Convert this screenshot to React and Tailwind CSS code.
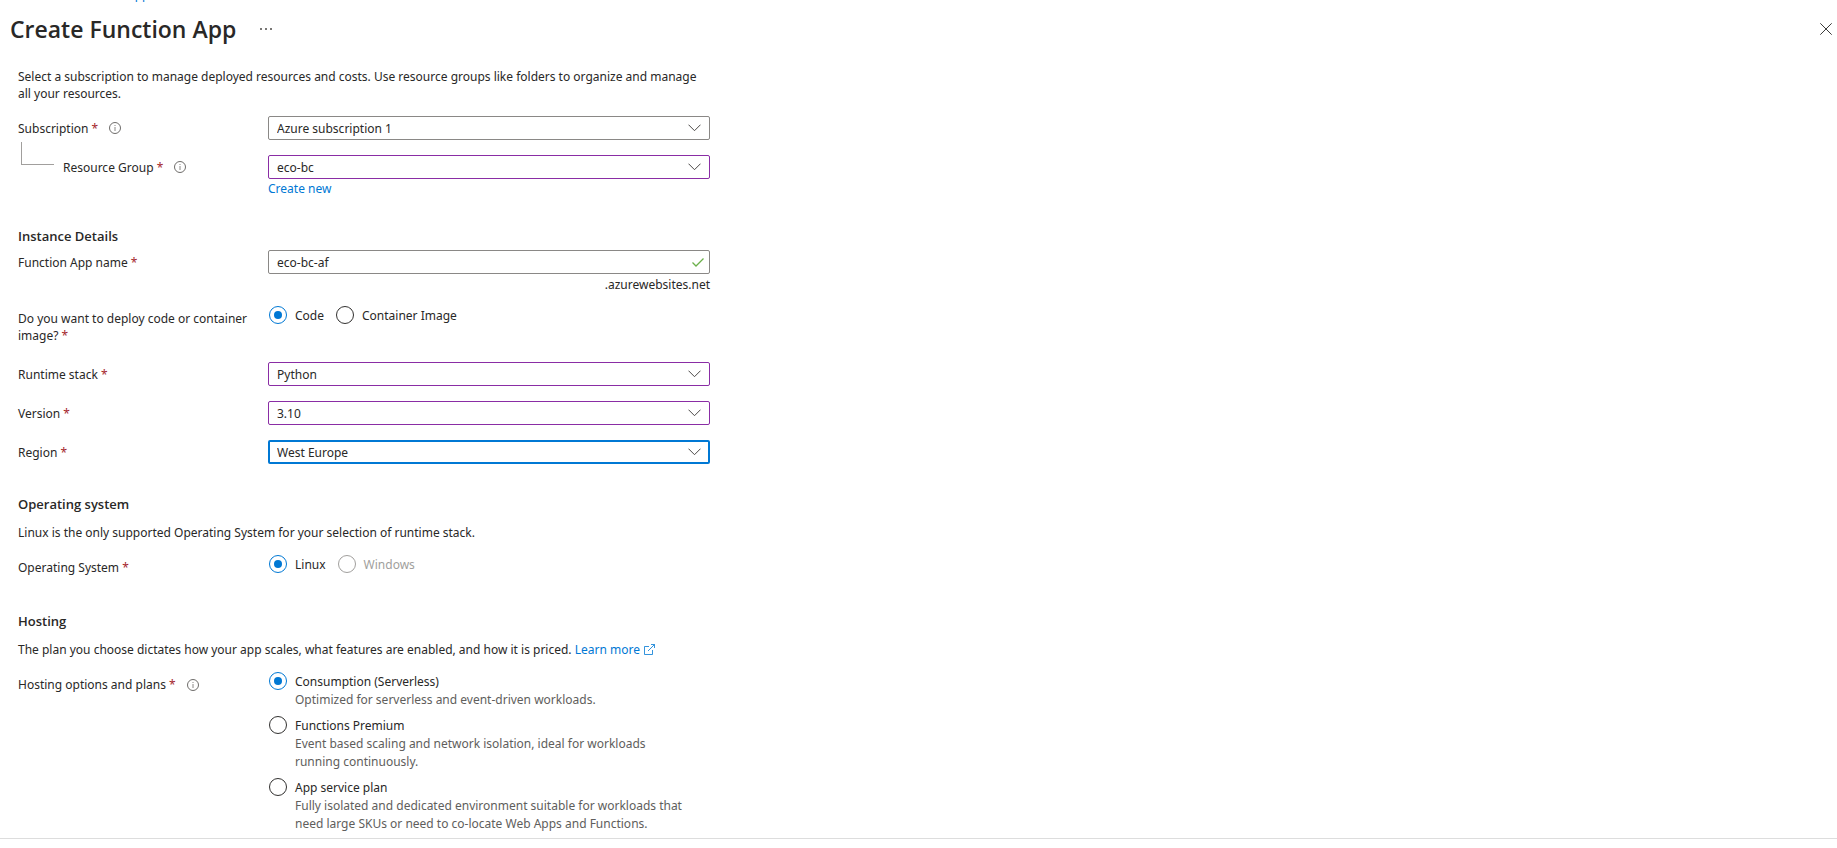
import React from 'react';

const InfoIcon = () => (
  <svg width="12" height="12" viewBox="0 0 12 12" fill="none" aria-hidden="true">
    <circle cx="6" cy="6" r="5.5" stroke="#6e6c6a" />
    <path d="M6 5v4M6 3v1" stroke="#8a8886" />
  </svg>
);

const Chevron = () => (
  <svg
    width="13"
    height="8"
    viewBox="0 0 13 8"
    fill="none"
    aria-hidden="true"
    className="absolute right-[9px] top-2 pointer-events-none"
  >
    <path d="M0.5 0.7L6.5 6.7L12.5 0.7" stroke="#4a4846" strokeWidth="1" />
  </svg>
);

const Required = () => <span className="text-[#a4262c]">*</span>;

const SectionTitle = ({ children, className = '' }) => (
  <h2 className={`font-['Open_Sans',sans-serif] text-[13px] font-semibold leading-5 ${className}`}>{children}</h2>
);

// Label on the left, control on the right
const Row = ({ children, className = '' }) => (
  <div className={`grid grid-cols-[250px_minmax(0,442px)] ${className}`}>{children}</div>
);

const FieldLabel = ({ htmlFor, text, info }) => (
  <div className="flex h-6 items-center gap-[11px]">
    <label htmlFor={htmlFor}>
      {text} <Required />
    </label>
    {info && (
      <button type="button" aria-label={`About ${text}`}>
        <InfoIcon />
      </button>
    )}
  </div>
);

const borders = {
  default: 'border border-[#8a8886] pl-2',
  edited: 'border border-[#8a2da5] pl-2',
  focused: 'border-2 border-[#0078d4] pl-[7px]',
};

const Select = ({ id, value, state = 'default' }) => (
  <div className="relative">
    <select
      id={id}
      defaultValue={value}
      className={`block h-6 w-full appearance-none rounded-xs bg-white pr-7 outline-none ${borders[state]}`}
    >
      <option>{value}</option>
    </select>
    <Chevron />
  </div>
);

const Radio = ({ name, label, description, checked, disabled }) => (
  <label className={`flex gap-2 ${disabled ? 'text-[#a19f9d]' : ''}`}>
    <input
      type="radio"
      name={name}
      defaultChecked={checked}
      disabled={disabled}
      className="grid size-[18px] shrink-0 appearance-none place-content-center rounded-full border border-[#323130] checked:border-[#0078d4] checked:before:size-2 checked:before:rounded-full checked:before:bg-[#0078d4] disabled:border-[#a19f9d]"
    />
    <span className="pt-px leading-[18px]">
      {label}
      {description && <span className="block text-[#605e5c]">{description}</span>}
    </span>
  </label>
);

const App = () => {
  return (
    <div className="flex min-h-screen flex-col bg-white font-['Noto_Sans','Open_Sans',sans-serif] text-[12px] leading-[17px] text-[#292827]">
      {/* Breadcrumb, mostly scrolled out of view */}
      <nav className="flex h-[3px] items-end gap-3 overflow-hidden pl-[10px]" aria-label="Breadcrumb">
        <a href="#home" className="text-[#0078d4]">Home</a>
        <span className="text-[#605e5c]">&gt;</span>
        <a href="#function-app" className="text-[#0078d4]">Function App</a>
        <span className="text-[#605e5c]">&gt;</span>
      </nav>

      {/* Title bar */}
      <header className="flex h-[52px] items-center pl-[10px] pr-[5px]">
        <h1 className="font-['Open_Sans',sans-serif] text-[23px] font-semibold leading-8">Create Function App</h1>
        <button type="button" aria-label="More" className="ml-6">
          <svg width="12" height="2" viewBox="0 0 12 2" fill="#797775" aria-hidden="true">
            <rect x="0" width="2" height="2" />
            <rect x="5" width="2" height="2" />
            <rect x="10" width="2" height="2" />
          </svg>
        </button>
        <button type="button" aria-label="Close" className="ml-auto">
          <svg width="12" height="12" viewBox="0 0 12 12" fill="none" stroke="#3b3a39" aria-hidden="true">
            <path d="M0.3 0.3L11.7 11.7M11.7 0.3L0.3 11.7" />
          </svg>
        </button>
      </header>

      <main className="px-[18px] pb-[5px] pt-[13px]">
        <p className="max-w-[700px]">
          Select a subscription to manage deployed resources and costs. Use resource groups like folders to organize and manage
          <br />
          all your resources.
        </p>

        <Row className="mt-[14px]">
          <FieldLabel htmlFor="subscription" text="Subscription" info />
          <Select id="subscription" value="Azure subscription 1" />
        </Row>
        <Row className="mt-[15px]">
          <div className="flex pl-[3px]">
            <div className="-mt-[13px] mr-[9px] h-[23px] w-[33px] border-b border-l border-[#a19f9d]" />
            <FieldLabel htmlFor="resource-group" text="Resource Group" info />
          </div>
          <div>
            <Select id="resource-group" value="eco-bc" state="edited" />
            <a href="#create-new" className="mt-px block text-[#0078d4]">Create new</a>
          </div>
        </Row>

        <SectionTitle className="mt-[29px]">Instance Details</SectionTitle>
        <Row className="mt-1">
          <FieldLabel htmlFor="app-name" text="Function App name" />
          <div>
            <div className="relative">
              <input
                id="app-name"
                type="text"
                defaultValue="eco-bc-af"
                className="block h-6 w-full rounded-xs border border-[#8a8886] bg-white pl-2 pr-7 outline-none"
              />
              <svg
                width="12"
                height="9"
                viewBox="0 0 12 9"
                fill="none"
                aria-hidden="true"
                className="absolute right-[6px] top-2 pointer-events-none"
              >
                <path d="M0.5 4.5L4 8L11.5 0.5" stroke="#6bb04a" strokeWidth="1.3" />
              </svg>
            </div>
            <div className="mt-[2px] text-right">.azurewebsites.net</div>
          </div>
        </Row>

        <Row className="mt-[13px]">
          <div id="deploy-label" className="pt-1">
            Do you want to deploy code or container
            <br />
            image? <Required />
          </div>
          <div role="radiogroup" aria-labelledby="deploy-label" className="flex items-start gap-3 pl-px">
            <Radio name="deploy" label="Code" checked />
            <Radio name="deploy" label="Container Image" />
          </div>
        </Row>

        <Row className="mt-[18px]">
          <FieldLabel htmlFor="runtime" text="Runtime stack" />
          <Select id="runtime" value="Python" state="edited" />
        </Row>
        <Row className="mt-[15px]">
          <FieldLabel htmlFor="version" text="Version" />
          <Select id="version" value="3.10" state="edited" />
        </Row>
        <Row className="mt-[15px]">
          <FieldLabel htmlFor="region" text="Region" />
          <Select id="region" value="West Europe" state="focused" />
        </Row>

        <SectionTitle className="mt-[30px]">Operating system</SectionTitle>
        <p className="mt-[10px]">Linux is the only supported Operating System for your selection of runtime stack.</p>
        <Row className="mt-[14px]">
          <div id="os-label" className="pt-1">
            Operating System <Required />
          </div>
          <div role="radiogroup" aria-labelledby="os-label" className="flex items-start gap-3 pl-px">
            <Radio name="os" label="Linux" checked />
            <Radio name="os" label="Windows" disabled />
          </div>
        </Row>

        <SectionTitle className="mt-[35px]">Hosting</SectionTitle>
        <p className="mt-[10px]">
          The plan you choose dictates how your app scales, what features are enabled, and how it is priced.{' '}
          <a href="#learn-more" className="text-[#0078d4]">
            Learn more
            <svg
              width="11"
              height="11"
              viewBox="0 0 11 11"
              fill="none"
              stroke="currentColor"
              aria-hidden="true"
              className="ml-1 inline-block align-[-1px]"
            >
              <path d="M5 2.5H0.5V10.5H8.5V6M7 0.5H10.5V4M10.5 0.5L4 7" strokeWidth="0.8" />
            </svg>
          </a>
        </p>
        <Row className="mt-[14px]">
          <div className="flex items-start gap-[11px] pt-1">
            <span id="hosting-label">
              Hosting options and plans <Required />
            </span>
            <button type="button" aria-label="About hosting options and plans" className="mt-[3px]">
              <InfoIcon />
            </button>
          </div>
          <div role="radiogroup" aria-labelledby="hosting-label" className="flex flex-col gap-[7px] pl-px">
            <Radio
              name="hosting"
              label="Consumption (Serverless)"
              description="Optimized for serverless and event-driven workloads."
              checked
            />
            <Radio
              name="hosting"
              label="Functions Premium"
              description={<>Event based scaling and network isolation, ideal for workloads<br />running continuously.</>}
            />
            <Radio
              name="hosting"
              label="App service plan"
              description={<>Fully isolated and dedicated environment suitable for workloads that<br />need large SKUs or need to co-locate Web Apps and Functions.</>}
            />
          </div>
        </Row>
      </main>

      <footer className="grow border-t border-[#dddddd]" />
    </div>
  );
};

export default App;
